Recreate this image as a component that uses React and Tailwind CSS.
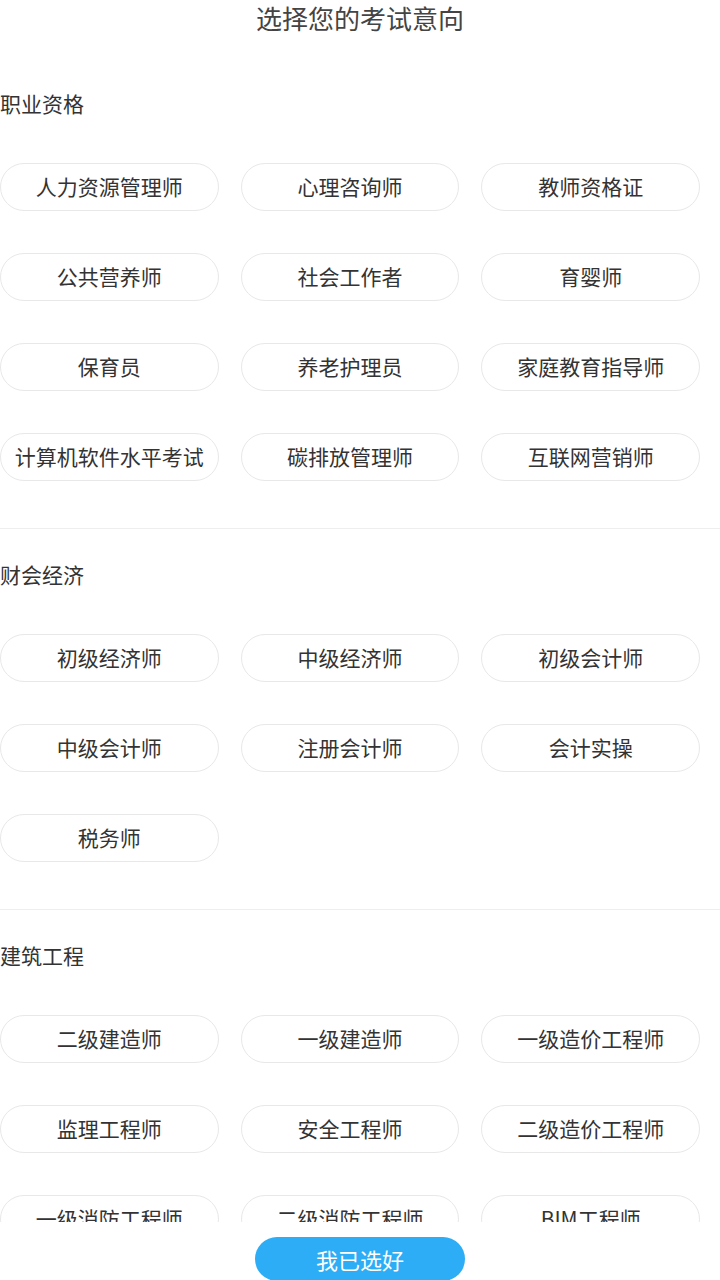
import React from "react";

const sections = [
  {
    title: "职业资格",
    items: [
      "人力资源管理师",
      "心理咨询师",
      "教师资格证",
      "公共营养师",
      "社会工作者",
      "育婴师",
      "保育员",
      "养老护理员",
      "家庭教育指导师",
      "计算机软件水平考试",
      "碳排放管理师",
      "互联网营销师",
    ],
  },
  {
    title: "财会经济",
    items: ["初级经济师", "中级经济师", "初级会计师", "中级会计师", "注册会计师", "会计实操", "税务师"],
  },
  {
    title: "建筑工程",
    items: [
      "二级建造师",
      "一级建造师",
      "一级造价工程师",
      "监理工程师",
      "安全工程师",
      "二级造价工程师",
      "一级消防工程师",
      "二级消防工程师",
      "BIM工程师",
    ],
  },
];

export default function App() {
  return (
    <div
      className="h-[1280px] w-[720px] bg-white flex flex-col overflow-hidden text-[#333]"
      style={{ fontFamily: '"Noto Sans CJK SC", "Noto Sans", sans-serif' }}
    >
      {/* scrolling list */}
      <div className="flex-1 overflow-hidden">
        <div className="h-[36px] leading-[36px] text-center text-[26px] text-[#444] mb-[22px]">
          选择您的考试意向
        </div>

        {sections.map((sec) => (
          <div key={sec.title} className="pt-[25px] pb-[47px] border-b border-[#eeeeee]">
            <div className="h-[40px] leading-[40px] text-[21px]">{sec.title}</div>
            <div className="mt-[40px] w-[700px] grid grid-cols-3 gap-x-[22px] gap-y-[42px]">
              {sec.items.map((it) => (
                <div
                  key={it}
                  className="h-[48px] rounded-full border border-[#e8e8e8] flex items-center justify-center text-[21px] leading-none pb-[2px] whitespace-nowrap"
                >
                  {it}
                </div>
              ))}
            </div>
          </div>
        ))}
      </div>

      {/* bottom action */}
      <div className="h-[58px] shrink-0 flex justify-center pt-[15px]">
        <button className="w-[210px] h-[44px] rounded-full bg-[#2cadf5] text-white text-[22px] flex items-center justify-center">
          我已选好
        </button>
      </div>
    </div>
  );
}
